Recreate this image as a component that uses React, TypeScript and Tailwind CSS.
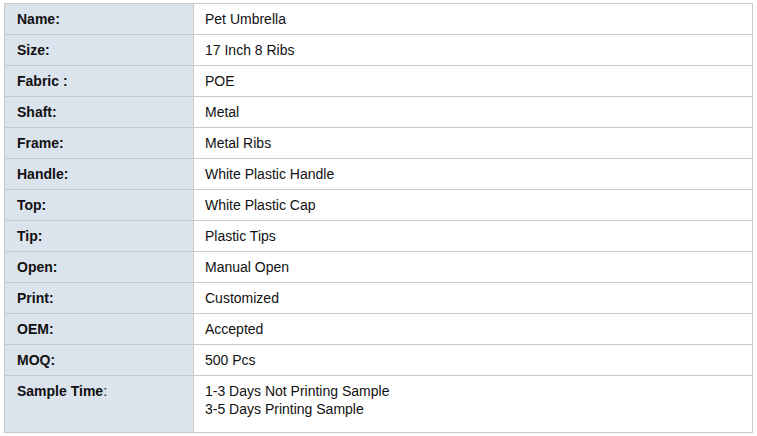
const rows: [string, string[]][] = [
  ["Name:", ["Pet Umbrella"]],
  ["Size:", ["17 Inch 8 Ribs"]],
  ["Fabric :", ["POE"]],
  ["Shaft:", ["Metal"]],
  ["Frame:", ["Metal Ribs"]],
  ["Handle:", ["White Plastic Handle"]],
  ["Top:", ["White Plastic Cap"]],
  ["Tip:", ["Plastic Tips"]],
  ["Open:", ["Manual Open"]],
  ["Print:", ["Customized"]],
  ["OEM:", ["Accepted"]],
  ["MOQ:", ["500 Pcs"]],
];

export default function App() {
  return (
    <div className="w-[757px] h-[436px] bg-white pl-[4px] pt-[3px] font-['Liberation_Sans',Arial,sans-serif] text-[14px] text-[#111]">
      <table className="w-[749px] border-collapse">
        <tbody>
          {rows.map(([label, value]) => (
            <tr key={label} className="h-[31px]">
              <td className="w-[189px] border border-[#c9c9c9] bg-[#dbe3ed] pl-[12px] align-middle font-bold">
                {label}
              </td>
              <td className="border border-[#c9c9c9] pl-[11px] align-middle">
                {value}
              </td>
            </tr>
          ))}
          <tr className="h-[57px]">
            <td className="border border-[#c9c9c9] bg-[#dbe3ed] pl-[12px] pt-[6px] align-top leading-[18px]">
              <span className="font-bold">Sample Time</span>:
            </td>
            <td className="border border-[#c9c9c9] pl-[11px] pt-[6px] align-top leading-[18px]">
              <div>1-3 Days Not Printing Sample</div>
              <div>3-5 Days Printing Sample</div>
            </td>
          </tr>
        </tbody>
      </table>
    </div>
  );
}
